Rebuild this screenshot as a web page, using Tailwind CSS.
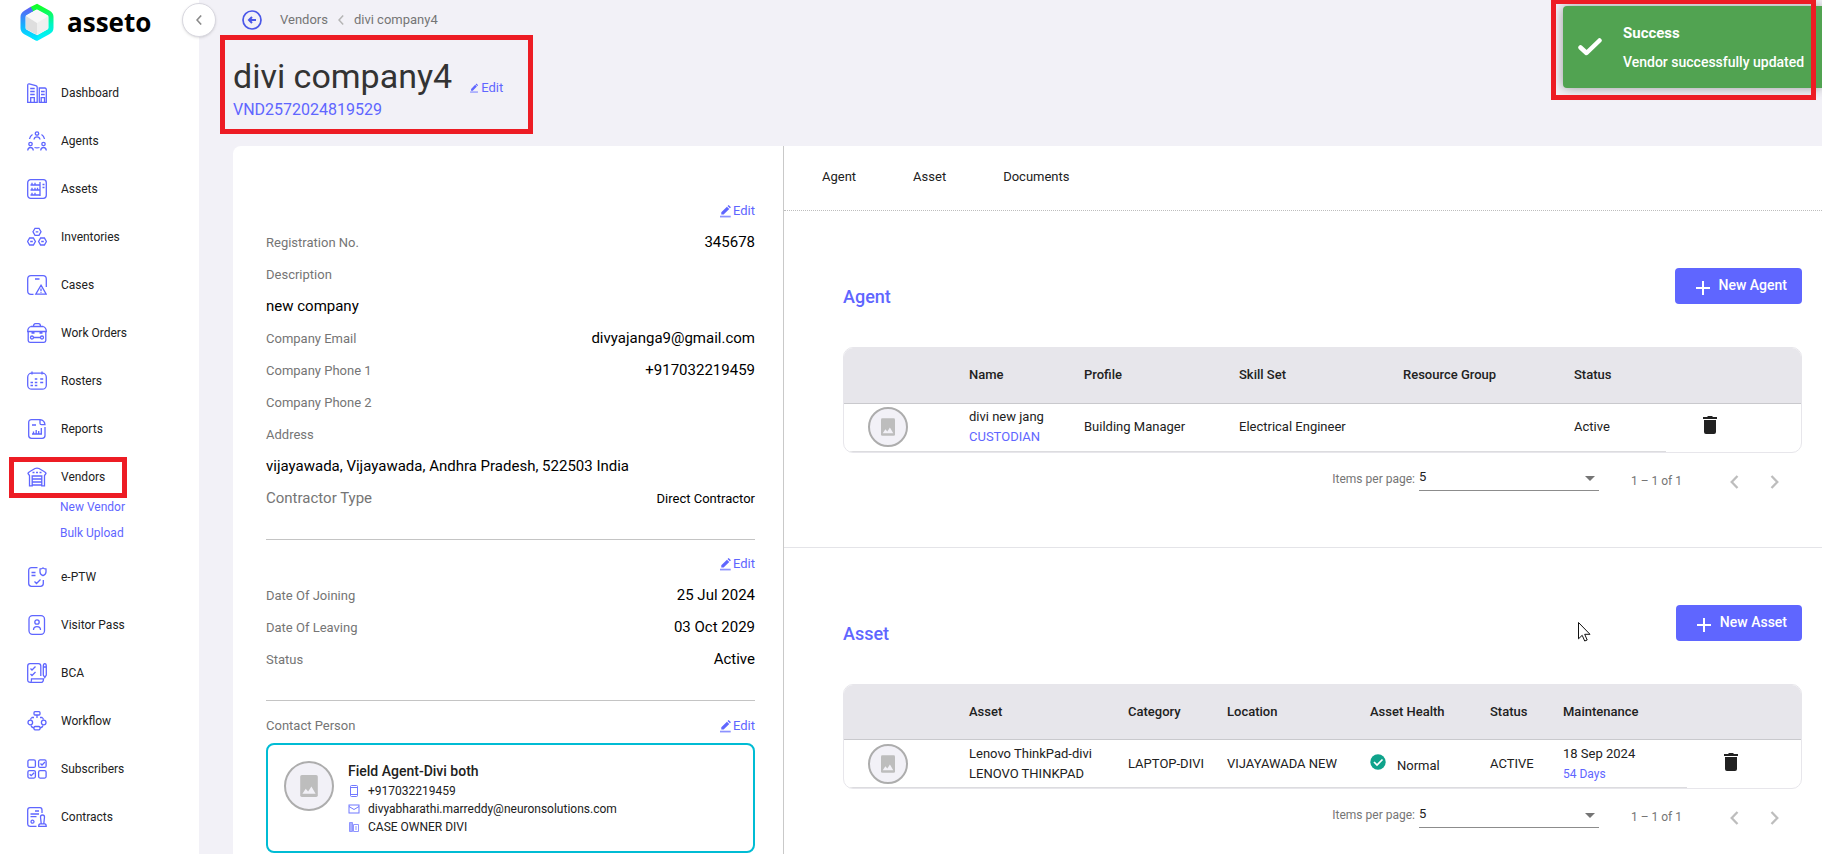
<!DOCTYPE html>
<html lang="en">
<head>
<meta charset="utf-8">
<title>asseto – divi company4</title>
<script src="https://cdn.jsdelivr.net/npm/@tailwindcss/browser@4"></script>
</head>
<body class="bg-[#f2f1f7] text-[#212121] font-[Roboto,sans-serif] text-xs">

<svg class="hidden" aria-hidden="true">
  <symbol id="pen" viewBox="0 0 14 16"><path d="M1.500 9.500v2.700h2.700l6.600-6.600-2.700-2.700zM12.800 3.600 10.100.9l-1.300 1.300 2.700 2.700z" fill="#5f66ff"/><path d="M0 13.500h12.500v2H0z" fill="#8c92ff"/></symbol>
  <symbol id="photo" viewBox="0 0 16 20"><rect x="0" y="0" width="16" height="20" rx="1.500" fill="#bdbdbd"/><path d="M2 17l3-4.500 2.200 2.500 3-4.500L14 17z" fill="#f2f1f7"/></symbol>
  <symbol id="trash" viewBox="0 0 14 18"><path d="M1 4h12v12a2 2 0 0 1-2 2H3a2 2 0 0 1-2-2zM0 1h4l1-1h4l1 1h4v2H0z" fill="#212121"/></symbol>
  <symbol id="prev" viewBox="0 0 9 14"><path d="M7.500 1 1.700 7l5.800 6" fill="none" stroke="#bdbdbd" stroke-width="2.300"/></symbol>
  <symbol id="next" viewBox="0 0 9 14"><path d="M1.500 1l5.800 6-5.800 6" fill="none" stroke="#bdbdbd" stroke-width="2.300"/></symbol>
  <symbol id="plus" viewBox="0 0 16 16"><path d="M8 1v14M1 8h14" stroke="#fff" stroke-width="2"/></symbol>
</svg>

<div class="relative flex min-h-screen">

  <aside class="relative w-[199px] shrink-0 bg-white">
    <a href="#" class="flex h-[69px] items-start pl-5 pt-[3px]" aria-label="asseto home">
      <svg class="h-[39px] w-[34px]" viewBox="0 0 34 39" fill="none" aria-hidden="true">
        <defs>
          <linearGradient id="lg1" x1="0" y1="0" x2="0" y2="1"><stop offset="0" stop-color="#12ff2a"/><stop offset=".55" stop-color="#00f6c0"/><stop offset="1" stop-color="#00f0ff"/></linearGradient>
          <linearGradient id="lg2" x1="0" y1="0" x2="0" y2="1"><stop offset="0" stop-color="#5a66f5"/><stop offset=".6" stop-color="#12b5ff"/><stop offset="1" stop-color="#00e5ff"/></linearGradient>
        </defs>
        <path d="M11 6.500 17 3.500l11.500 6.300q2.500 1.500 2.500 4v11q0 2.700-2.500 4L17 35.200 13 33" stroke="url(#lg1)" stroke-width="5"/>
        <path d="M12 6 5.500 9.800Q3 11.200 3 14v11q0 2.500 2.500 4L17 35.200" stroke="url(#lg2)" stroke-width="5"/>
        <path d="M17 7l11 6-11 7-11-7z" fill="#f8f8f8"/>
        <path d="M6 13l11 7v12L6 26z" fill="#dedede"/>
        <path d="M28 13l-11 7v12l11-6z" fill="#efefef"/>
      </svg>
      <span class="ml-[13px] font-['Open_Sans',sans-serif] text-[26px] leading-[38px] font-bold text-black">asseto</span>
    </a>
    <button class="absolute top-[3px] -right-[17px] z-10 flex size-[34px] items-center justify-center rounded-full border border-[#d9d8e0] bg-white shadow" aria-label="Collapse menu">
      <svg class="h-2.5 w-1.5" viewBox="0 0 6 10"><path d="M5.200.5 1 5l4.200 4.500" fill="none" stroke="#8a8a8a" stroke-width="1.600"/></svg>
    </button>

    <nav class="[&_svg]:size-5 [&_svg]:shrink-0 [&_svg]:fill-none [&_svg]:stroke-[#5f66ff] [&_svg]:stroke-[1.300]">
      <a href="#" class="flex h-12 items-center gap-3.5 pl-[27px]"><svg viewBox="0 0 20 20"><path d="M.7 19.300V2.200Q.7.700 2.200.900l6.600 1.700q1.400.4 1.400 1.600v15.100zM12.300 19.300V5h5.700q1.300.2 1.300 1.500v12.800zM3.200 5.500h4.500M3.200 8.500h4.500M3.200 11.500h4.500M14 8.500h3.700M14 11.500h3.700M3.700 19v-4.300h3.600V19M14.200 19v-4.300h3.300V19"/></svg>Dashboard</a>
      <a href="#" class="flex h-12 items-center gap-3.5 pl-[27px]"><svg viewBox="0 0 20 20"><circle cx="10" cy="2.500" r="1.700"/><path d="M7 8.500Q7.500 5.800 10 5.800t3 2.700M5.500 3.500Q3 5 2.500 8M14.500 3.500Q17 5 17.500 8M7.500 16.500q2.500.8 5 0"/><circle cx="3.500" cy="13" r="1.700"/><path d="M.7 19.500q.3-3 2.800-3t2.800 3"/><circle cx="16.500" cy="13" r="1.700"/><path d="M13.700 19.500q.3-3 2.800-3t2.800 3"/></svg>Agents</a>
      <a href="#" class="flex h-12 items-center gap-3.5 pl-[27px]"><svg viewBox="0 0 20 20"><rect x=".7" y=".7" width="18.600" height="18.600" rx="3"/><path d="M3.500 6h9M3.500 11h9M3.500 16h9M13 3v14M5 3.700v2M8 3.700v2M5 8.700v2M8 8.700v2M10.500 8.700v2M5 13.700v2M8 13.700v2M15.500 5.500h2M15.500 8.500h2"/></svg>Assets</a>
      <a href="#" class="flex h-12 items-center gap-3.5 pl-[27px]"><svg viewBox="0 0 20 20"><path d="M8 1.300h4l2 3.500-2 3.500H8L6 4.800zM2.600 11h3.800l2 3.500-2 3.500H2.600l-2-3.500zM13.600 11h3.800l2 3.500-2 3.500h-3.800l-2-3.500zM8.700 4.800h2.600M3.200 14.500h2.600M14.200 14.500h2.600"/></svg>Inventories</a>
      <a href="#" class="flex h-12 items-center gap-3.5 pl-[27px]"><svg viewBox="0 0 20 20"><path d="M6.500 19.300H4q-3.300 0-3.300-3.300V4Q.7.700 4 .7h12q3.300 0 3.300 3.300v8M8 4h4.500M14 10.200l5.200 9H8.800zM14 13.500v2.800M14 17.200v.900"/></svg>Cases</a>
      <a href="#" class="flex h-12 items-center gap-3.5 pl-[27px]"><svg viewBox="0 0 20 20"><path d="M6.500 3.500Q6.500.7 8.500.7h3q2 0 2 2.800M4 3.500h12q3.300 1 3.300 5H.7q0-4 3.300-5zM1.200 8.500v9q0 1.800 1.800 1.800h14q1.800 0 1.800-1.800v-9M4.500 10h3M12.500 10h3M6.500 14.500h7"/><circle cx="5" cy="14.500" r="1.500"/><circle cx="15" cy="14.500" r="1.500"/></svg>Work Orders</a>
      <a href="#" class="flex h-12 items-center gap-3.5 pl-[27px]"><svg viewBox="0 0 20 20"><rect x=".7" y="2.200" width="18.600" height="16" rx="4"/><path d="M5 .5v3M15 .5v3M7.800 8h2.500M13.200 8h3M3.500 11.500H6M7.800 11.500h2.500M13.200 11.500h3M3.500 14.500H6M7.800 14.500h2.500"/></svg>Rosters</a>
      <a href="#" class="flex h-12 items-center gap-3.5 pl-[27px]"><svg viewBox="0 0 20 20"><path d="M13 .7H4.500Q1.700.7 1.700 3.500v13q0 2.800 2.800 2.800h10.700q2.800 0 2.800-2.800V8M13 .7q4.500.5 5 5h-3.500q-1.500 0-1.500-1.500zM5 6h4M5 15h10M6.500 15v-2.500M9.200 15v-4M11.700 15v-3M14.300 15V9"/></svg>Reports</a>
      <div>
        <a href="#" class="relative flex h-12 items-center gap-3.5 pl-[27px]"><svg viewBox="0 0 20 20"><path d="M2.500 18.800V8.500L1 6.500q0-1 1.500-1.700L8 1.500q2-.8 4 0l5.500 3.300Q19 5.500 19 6.500l-1.500 2v10.300h-2.700V9H5.200v9.800zM5.500 5.500h2M9 5.500h2M12.500 5.500h2M5.500 12h9M5.500 15h9M5.500 18h9"/></svg>Vendors
          <span class="pointer-events-none absolute top-1 left-[9px] h-[41px] w-[118px] border-5 border-[#ed1c24]"></span>
        </a>
        <div class="-mt-[7px] pb-[7px] pl-[60px] text-[#5f66ff]">
          <a href="#" class="flex h-[26px] items-center">New Vendor</a>
          <a href="#" class="flex h-[26px] items-center">Bulk Upload</a>
        </div>
      </div>
      <a href="#" class="flex h-12 items-center gap-3.5 pl-[27px]"><svg viewBox="0 0 20 20"><path d="M10.500.7h-6Q1.700.7 1.700 3.500v13q0 2.800 2.800 2.800h9q2.800 0 2.800-2.800V13M4.500 5.500h4M4.500 8.500h4M7.500 14.500l2 2 4-4M16 .9q1.300 1 3 1.100v3q0 2.500-3 3.700-3-1.200-3-3.700V2q1.700-.1 3-1.100z"/></svg>e-PTW</a>
      <a href="#" class="flex h-12 items-center gap-3.5 pl-[27px]"><svg viewBox="0 0 20 20"><rect x="2" y=".7" width="15.500" height="18.600" rx="3.500"/><circle cx="10" cy="7" r="2.200"/><path d="M6.500 15q0-3.300 3.500-3.300t3.500 3.300"/></svg>Visitor Pass</a>
      <a href="#" class="flex h-12 items-center gap-3.5 pl-[27px]"><svg viewBox="0 0 20 20"><path d="M3.500 19.300Q.7 19.300.7 17V3Q.7.700 3 .7h8.500q2.300 0 2.300 2.300v10M3.500 19.300h11q2 0 2-3.500h-12q0 3.500-1 3.500M3.500 5.500 5 7l3.500-3.500M3.500 11 5 12.500 8.500 9M16.300 3.500q0-2.800 1.500-2.800t1.500 2.800V12l-1.500 2.500-1.500-2.500zM16.300 4h3"/></svg>BCA</a>
      <a href="#" class="flex h-12 items-center gap-3.5 pl-[27px]"><svg viewBox="0 0 20 20"><rect x="7" y=".7" width="6" height="3.300" rx="1"/><path d="M10 4v3M7 6.500H5q-1 .5-1.500 2M13 6.500h2q1 .5 1.500 2M4 14.500q.5 2 3 2.500M16 14.500q-.5 2-3 2.500"/><circle cx="3.300" cy="11.500" r="2.300"/><circle cx="16.700" cy="11.500" r="2.300"/><rect x="7" y="15.500" width="6" height="3.300" rx="1"/></svg>Workflow</a>
      <a href="#" class="flex h-12 items-center gap-3.5 pl-[27px]"><svg viewBox="0 0 20 20"><rect x=".9" y=".9" width="7.500" height="7.500" rx="1.500"/><rect x="11.600" y=".9" width="7.500" height="7.500" rx="1.500"/><rect x=".9" y="11.600" width="7.500" height="7.500" rx="1.500"/><rect x="11.600" y="11.600" width="7.500" height="7.500" rx="1.500"/><path d="M13.500 4.500 15 6l3-3M2.700 15.200l1.500 1.500 3-3"/></svg>Subscribers</a>
      <a href="#" class="flex h-12 items-center gap-3.5 pl-[27px]"><svg viewBox="0 0 20 20"><path d="M9.500 19.300h-6q-2.800 0-2.800-2.500V3Q.7.700 3 .7h10q2 0 2 2.300v3M8 4h4M3.500 7h8.500M3.500 9.700h6M14.200 16.500 13.500 10q0-2 2-2t2 2l-.7 6.500M11.700 19.300q0-2.500 1.500-2.500h4.500q1.500 0 1.500 2.500z"/><circle cx="5.500" cy="14.700" r="1.500"/></svg>Contracts</a>
    </nav>
  </aside>

  <main class="flex min-w-0 flex-1 flex-col">
    <header class="h-[146px] pl-[34px]">
      <nav class="flex h-10 items-center pl-[9px] text-[13px] text-[#757575]" aria-label="Breadcrumb">
        <button aria-label="Back"><svg class="size-5" viewBox="0 0 20 20" fill="none" stroke="#4a57e8"><circle cx="10" cy="10" r="9" stroke-width="1.700"/><path d="M14 10H7.500M10 7l-3 3 3 3" stroke-width="2"/></svg></button>
        <a href="#" class="ml-[18px]">Vendors</a>
        <svg class="mx-2.5 h-2.5 w-1.5" viewBox="0 0 6 10"><path d="M5.200.5 1 5l4.200 4.500" fill="none" stroke="#b5b5b5" stroke-width="1.500"/></svg>
        <span>divi company4</span>
      </nav>
      <div class="relative pt-4">
        <div class="flex items-end">
          <h1 class="text-[34px] leading-10 text-[#333]">divi company4</h1>
          <a href="#" class="ml-[18px] flex items-center text-[13px] leading-4 text-[#5f66ff]"><svg class="mr-0.5 h-2.5 w-[9px]"><use href="#pen"/></svg>Edit</a>
        </div>
        <p class="mt-0.5 text-base leading-6 text-[#5f66ff]">VND2572024819529</p>
        <span class="pointer-events-none absolute -top-[5px] -left-[13px] h-[99px] w-[313px] border-5 border-[#ed1c24]"></span>
      </div>
    </header>

    <div class="ml-[34px] flex flex-1 rounded-tl-lg bg-white">
      <section class="w-[550px] shrink-0 pl-[33px] pr-7 pt-[49px] text-[13px] text-[#757575] [&_dd]:text-[15px] [&_dd]:text-black [&_dl>div]:flex [&_dl>div]:h-8 [&_dl>div]:items-center [&_dl>div]:justify-between">
        <div class="flex h-8 items-center justify-end"><a href="#" class="flex items-center text-[#5f66ff]"><svg class="mr-px h-[14px] w-3"><use href="#pen"/></svg>Edit</a></div>
        <dl>
          <div><dt>Registration No.</dt><dd>345678</dd></div>
          <div><dt>Description</dt></div>
          <div><dd>new company</dd></div>
          <div><dt>Company Email</dt><dd>divyajanga9@gmail.com</dd></div>
          <div><dt>Company Phone 1</dt><dd>+917032219459</dd></div>
          <div><dt>Company Phone 2</dt></div>
          <div><dt>Address</dt></div>
          <div><dd>vijayawada, Vijayawada, Andhra Pradesh, 522503 India</dd></div>
          <div><dt class="text-[15px]">Contractor Type</dt><dd class="text-[13px]!">Direct Contractor</dd></div>
        </dl>
        <hr class="mt-6 border-[#c4c4c4]">
        <div class="mt-2 flex h-8 items-center justify-end"><a href="#" class="flex items-center text-[#5f66ff]"><svg class="mr-px h-[14px] w-3"><use href="#pen"/></svg>Edit</a></div>
        <dl>
          <div><dt>Date Of Joining</dt><dd>25 Jul 2024</dd></div>
          <div><dt>Date Of Leaving</dt><dd>03 Oct 2029</dd></div>
          <div><dt>Status</dt><dd>Active</dd></div>
        </dl>
        <hr class="mt-6 border-[#c4c4c4]">
        <div class="mt-2 flex h-[34px] items-center justify-between"><h2>Contact Person</h2><a href="#" class="flex items-center text-[#5f66ff]"><svg class="mr-px h-[14px] w-3"><use href="#pen"/></svg>Edit</a></div>
        <div class="flex rounded-lg border-2 border-[#00bcd4] pt-4 pb-[15px] pl-4 text-xs text-[#212121]">
          <div class="flex size-[50px] items-center justify-center rounded-full border-2 border-[#adadad] bg-[#f2f1f7]"><svg class="h-[22px] w-[18px]"><use href="#photo"/></svg></div>
          <div class="-mt-px ml-3.5">
            <h3 class="text-sm leading-[22px] font-medium">Field Agent-Divi both</h3>
            <p class="flex h-[18px] items-center"><svg class="mr-2 h-3 w-3" viewBox="0 0 12 12" fill="none" stroke="#7178ff"><rect x="2.500" y=".5" width="7" height="11" rx="1"/><path d="M2.500 2.500h7M2.500 9.500h7"/></svg>+917032219459</p>
            <p class="flex h-[18px] items-center"><svg class="mr-2 h-3 w-3" viewBox="0 0 12 12" fill="none" stroke="#7178ff"><rect x="1" y="2" width="10" height="8"/><path d="M1 3.500l5 3 5-3"/></svg>divyabharathi.marreddy@neuronsolutions.com</p>
            <p class="flex h-[18px] items-center"><svg class="mr-2 h-3 w-3" viewBox="0 0 12 12" fill="none" stroke="#8f95ff"><path d="M1.500 1.500h3v9h-3z" fill="#a9aeff"/><path d="M5.500 3.500h5v7h-5zM8 5v4"/></svg>CASE OWNER DIVI</p>
          </div>
        </div>
      </section>

      <section class="min-w-0 flex-1 border-l border-[#c9c9c9]">
        <nav class="flex h-[65px] gap-[57px] border-b border-dotted border-[#bdbdbd] pt-[21px] pl-[38px] text-[13px] leading-5">
          <a href="#agent">Agent</a><a href="#asset">Asset</a><a href="#documents">Documents</a>
        </nav>

        <section id="agent" class="border-b border-[#e4e4e8] pt-[57px] pr-5 pb-[38px] pl-[59px]">
          <div class="flex h-[79px] items-start justify-between">
            <h2 class="pt-[17px] text-lg leading-6 font-medium text-[#5f66ff]">Agent</h2>
            <button class="flex h-9 items-center rounded bg-[#5f66ff] pr-[15px] pb-0.5 pl-5 text-sm font-medium text-white"><svg class="mt-1.5 mr-2 size-4"><use href="#plus"/></svg>New Agent</button>
          </div>
          <div class="overflow-hidden rounded-[10px] border border-[#e7e6eb]">
            <table class="w-full table-fixed text-left text-[13px] leading-5">
              <colgroup><col class="w-[125px]"><col class="w-[115px]"><col class="w-[155px]"><col class="w-[164px]"><col class="w-[171px]"><col class="w-[92px]"><col class="w-[135px]"></colgroup>
              <thead><tr class="h-[55px] border-b border-[#c9c9cd] bg-[#e7e6eb] [&>th]:font-medium"><th></th><th>Name</th><th>Profile</th><th>Skill Set</th><th>Resource Group</th><th>Status</th><th></th></tr></thead>
              <tbody><tr class="h-12 [&>td:not(:last-child)]:border-b [&>td]:border-[#dcdcdf]">
                <td class="pl-6"><div class="flex size-10 items-center justify-center rounded-full border-2 border-[#adadad] bg-[#f2f1f7]"><svg class="h-[18px] w-3.5"><use href="#photo"/></svg></div></td>
                <td>divi new jang<br><a href="#" class="text-[#5f66ff]">CUSTODIAN</a></td>
                <td>Building Manager</td><td>Electrical Engineer</td><td></td><td>Active</td>
                <td class="pl-[37px]"><button class="block pb-1" aria-label="Delete agent"><svg class="h-[18px] w-3.5"><use href="#trash"/></svg></button></td>
              </tr></tbody>
            </table>
          </div>
          <div class="flex h-14 items-center justify-end pr-[23px] text-[#757575]">
            <label for="agentSize" class="mr-1 pb-1">Items per page:</label>
            <div class="relative mb-1.5 w-[180px]">
              <select id="agentSize" class="block h-[27px] w-full appearance-none border-b border-[#8c8c8c] text-[13px] text-[#212121]"><option>5</option></select>
              <svg class="pointer-events-none absolute top-3 right-1 h-[5px] w-2.5" viewBox="0 0 10 5"><path d="M0 0h10L5 5z" fill="#757575"/></svg>
            </div>
            <span class="ml-8">1 – 1 of 1</span>
            <button class="ml-12 pt-0.5" aria-label="Previous page"><svg class="h-3.5 w-[9px]"><use href="#prev"/></svg></button>
            <button class="ml-[31px] pt-0.5" aria-label="Next page"><svg class="h-3.5 w-[9px]"><use href="#next"/></svg></button>
          </div>
        </section>

        <section id="asset" class="pt-[57px] pr-5 pl-[59px]">
          <div class="flex h-[79px] items-start justify-between">
            <h2 class="pt-[17px] text-lg leading-6 font-medium text-[#5f66ff]">Asset</h2>
            <button class="flex h-9 items-center rounded bg-[#5f66ff] pr-[15px] pb-0.5 pl-5 text-sm font-medium text-white"><svg class="mt-1.5 mr-2 size-4"><use href="#plus"/></svg>New Asset</button>
          </div>
          <div class="overflow-hidden rounded-[10px] border border-[#e7e6eb]">
            <table class="w-full table-fixed text-left text-[13px] leading-5">
              <colgroup><col class="w-[125px]"><col class="w-[159px]"><col class="w-[99px]"><col class="w-[143px]"><col class="w-[120px]"><col class="w-[73px]"><col class="w-[124px]"><col class="w-[114px]"></colgroup>
              <thead><tr class="h-[55px] border-b border-[#c9c9cd] bg-[#e7e6eb] [&>th]:font-medium"><th></th><th>Asset</th><th>Category</th><th>Location</th><th>Asset Health</th><th>Status</th><th>Maintenance</th><th></th></tr></thead>
              <tbody><tr class="h-12 [&>td:not(:last-child)]:border-b [&>td]:border-[#dcdcdf]">
                <td class="pl-6"><div class="flex size-10 items-center justify-center rounded-full border-2 border-[#adadad] bg-[#f2f1f7]"><svg class="h-[18px] w-3.5"><use href="#photo"/></svg></div></td>
                <td>Lenovo ThinkPad-divi<br>LENOVO THINKPAD</td>
                <td>LAPTOP-DIVI</td><td>VIJAYAWADA NEW</td>
                <td><span class="flex items-end gap-[11px] pt-0.5"><svg class="mb-1.5 size-4" viewBox="0 0 16 16"><circle cx="8" cy="8" r="7.700" fill="#0fa38b"/><path d="M4 8l3 3 5.500-5.500" fill="none" stroke="#fff" stroke-width="1.700"/></svg>Normal</span></td>
                <td>ACTIVE</td>
                <td>18 Sep 2024<br><a href="#" class="text-xs text-[#5f66ff]">54 Days</a></td>
                <td class="pl-[37px]"><button class="block pb-1" aria-label="Delete asset"><svg class="h-[18px] w-3.5"><use href="#trash"/></svg></button></td>
              </tr></tbody>
            </table>
          </div>
          <div class="flex h-14 items-center justify-end pr-[23px] text-[#757575]">
            <label for="assetSize" class="mr-1 pb-1">Items per page:</label>
            <div class="relative mb-1.5 w-[180px]">
              <select id="assetSize" class="block h-[27px] w-full appearance-none border-b border-[#8c8c8c] text-[13px] text-[#212121]"><option>5</option></select>
              <svg class="pointer-events-none absolute top-3 right-1 h-[5px] w-2.5" viewBox="0 0 10 5"><path d="M0 0h10L5 5z" fill="#757575"/></svg>
            </div>
            <span class="ml-8">1 – 1 of 1</span>
            <button class="ml-12 pt-0.5" aria-label="Previous page"><svg class="h-3.5 w-[9px]"><use href="#prev"/></svg></button>
            <button class="ml-[31px] pt-0.5" aria-label="Next page"><svg class="h-3.5 w-[9px]"><use href="#next"/></svg></button>
          </div>
        </section>
      </section>
    </div>
  </main>

  <div role="status" class="absolute top-1.5 right-0 flex h-[82px] w-[259px] items-center rounded-l bg-[#51a351] pl-[15px] text-white shadow-[0_0_12px_#999]">
    <svg class="h-[18px] w-6" viewBox="0 0 24 18"><path d="M2.500 9.500 8.500 15 21.500 2.500" fill="none" stroke="#fff" stroke-width="4.500" stroke-linecap="round" stroke-linejoin="round"/></svg>
    <div class="ml-[21px] text-sm leading-5">
      <p class="text-[15px] font-bold">Success</p>
      <p class="mt-[9px] font-medium">Vendor successfully updated</p>
    </div>
  </div>
  <span class="pointer-events-none absolute top-0 right-1.5 h-[100px] w-[265px] border-5 border-t-4 border-[#ed1c24]"></span>

  <svg class="pointer-events-none absolute top-[622px] right-[231px] h-5 w-[13px]" viewBox="0 0 13 20"><path d="M.5.500v16.300l3.700-3.500 2.500 5.700 2.500-1-2.500-5.700h5.300z" fill="#fff" stroke="#111"/></svg>
</div>
</body>
</html>
